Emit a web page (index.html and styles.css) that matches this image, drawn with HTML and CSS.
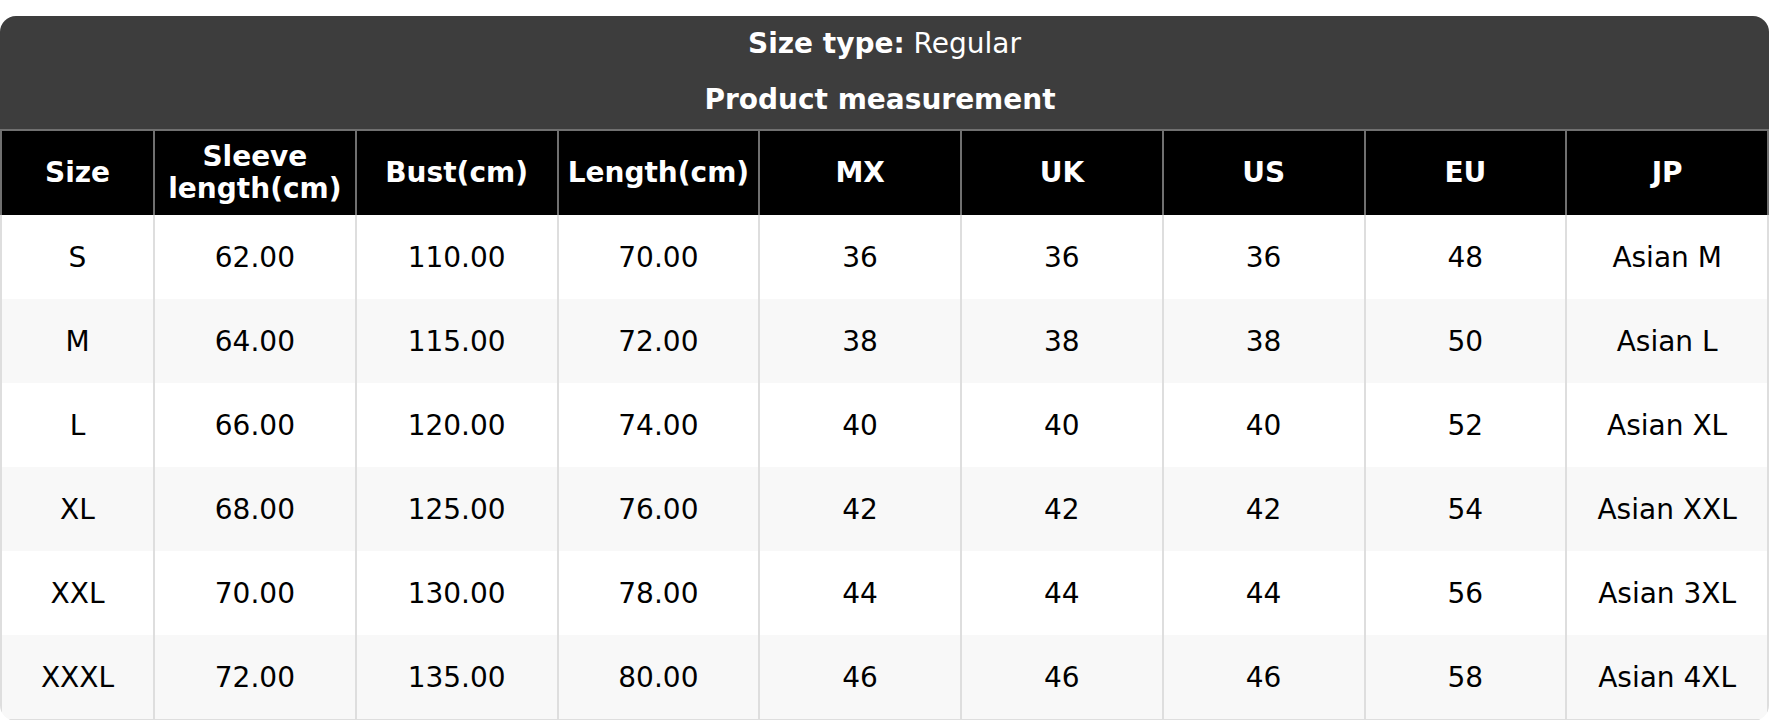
FILE: index.html
```html
<!DOCTYPE html>
<html>
<head>
<meta charset="utf-8">
<link rel="stylesheet" href="styles.css">
</head>
<body>
<div class="card">
  <div class="caption">
    <div class="cap-line"><span class="cap-key">Size type:</span> Regular</div>
    <div class="cap-line cap-key cap-title">Product measurement</div>
  </div>
  <table class="sizes">
    <colgroup>
      <col class="c-first">
      <col><col><col><col><col><col><col><col>
    </colgroup>
    <thead>
      <tr>
        <th>Size</th>
        <th>Sleeve<br>length(cm)</th>
        <th>Bust(cm)</th>
        <th>Length(cm)</th>
        <th>MX</th>
        <th>UK</th>
        <th>US</th>
        <th>EU</th>
        <th>JP</th>
      </tr>
    </thead>
    <tbody>
      <tr><td>S</td><td>62.00</td><td>110.00</td><td>70.00</td><td>36</td><td>36</td><td>36</td><td>48</td><td>Asian M</td></tr>
      <tr><td>M</td><td>64.00</td><td>115.00</td><td>72.00</td><td>38</td><td>38</td><td>38</td><td>50</td><td>Asian L</td></tr>
      <tr><td>L</td><td>66.00</td><td>120.00</td><td>74.00</td><td>40</td><td>40</td><td>40</td><td>52</td><td>Asian XL</td></tr>
      <tr><td>XL</td><td>68.00</td><td>125.00</td><td>76.00</td><td>42</td><td>42</td><td>42</td><td>54</td><td>Asian XXL</td></tr>
      <tr><td>XXL</td><td>70.00</td><td>130.00</td><td>78.00</td><td>44</td><td>44</td><td>44</td><td>56</td><td>Asian 3XL</td></tr>
      <tr><td>XXXL</td><td>72.00</td><td>135.00</td><td>80.00</td><td>46</td><td>46</td><td>46</td><td>58</td><td>Asian 4XL</td></tr>
    </tbody>
  </table>
</div>
</body>
</html>
```
FILE: styles.css
```css
html, body {
  margin: 0;
  padding: 0;
  background: #fff;
}
body {
  padding-top: 16px;
  font-family: "DejaVu Sans", sans-serif;
  font-size: 28px;
  color: #000;
}
.card {
  width: 1769px;
  border-radius: 16px;
  overflow: hidden;
}
.caption {
  background: #3d3d3d;
  color: #fff;
  text-align: center;
  padding-bottom: 1px;
}
.cap-line {
  height: 56px;
  line-height: 56px;
}
.cap-key {
  font-weight: bold;
}
.cap-title {
  padding-right: 9px;
}
.sizes {
  width: 100%;
  border-collapse: collapse;
  table-layout: fixed;
}
.c-first {
  width: 153px;
}
.sizes th {
  background: #000;
  color: #fff;
  font-weight: bold;
  height: 84px;
  padding: 0 4px;
  line-height: 32px;
  border-top: 2px solid #707070;
  border-left: 2px solid #707070;
  border-right: 2px solid #707070;
  text-align: center;
  vertical-align: middle;
}
.sizes td {
  height: 84px;
  padding: 0 4px;
  text-align: center;
  vertical-align: middle;
  border-left: 2px solid #dedede;
  border-right: 2px solid #dedede;
}
.sizes tbody tr:last-child td {
  border-bottom: 2px solid #dedede;
}
.sizes tbody tr:nth-child(even) td {
  background: #f8f8f8;
}
```
